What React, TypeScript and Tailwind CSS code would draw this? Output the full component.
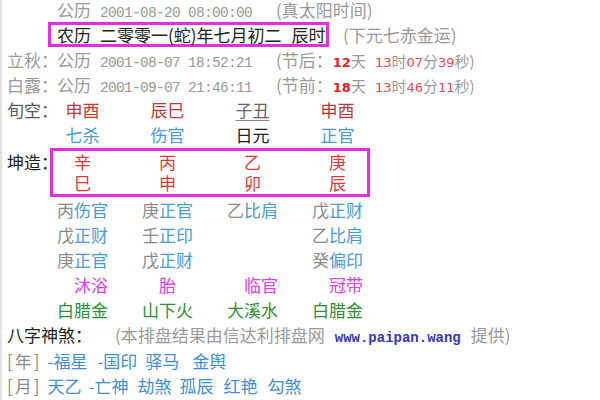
import React from "react";

const cjk = "font-['Noto_Sans_CJK_SC',sans-serif]";
const mono = "font-['Liberation_Mono',monospace] text-[14.5px] tracking-[-0.7px]";
const num = "font-['DejaVu_Sans',sans-serif] text-[13px]";

function Cells({ items, className = "" }: { items: React.ReactNode[]; className?: string }) {
  return (
    <div className={`grid grid-cols-[51px_51px_51px_51px] gap-x-[34px] text-center whitespace-nowrap ${className}`}>
      {items.map((x, i) => (
        <div key={i}>{x}</div>
      ))}
    </div>
  );
}

function HS({ s, g }: { s: string; g: string }) {
  return (
    <span>
      <span className="text-[#8a8a8a]">{s}</span>
      <span className="text-[#4a9ad8]">{g}</span>
    </span>
  );
}

function JieRow({ label, jie, date, d, h, m, s }: { label: string; jie: string; date: string; d: string; h: string; m: string; s: string }) {
  return (
    <div className="h-[25px] leading-[25px] whitespace-nowrap text-[#999]">
      <span className="inline-block w-[50px]">{label}</span>
      <span>公历</span>
      <span className={`${mono} ml-[9px]`}>{date}</span>
      <span className="ml-[24px]">({jie}：</span>
      <span className={`${num} font-bold text-[#e3202c]`}>{d}</span>
      <span className="text-[15px]">天</span>
      <span className={`${num} ml-[9px] text-[#e04a5a]`}>{h}</span>
      <span className="text-[15px]">时</span>
      <span className={`${num} text-[#e04a5a]`}>{m}</span>
      <span className="text-[15px]">分</span>
      <span className={`${num} text-[#e04a5a]`}>{s}</span>
      <span className="text-[15px]">秒)</span>
    </div>
  );
}

export default function App() {
  const row = "h-[25px] leading-[25px] flex items-center";
  return (
    <div className={`w-[600px] h-[400px] overflow-hidden bg-white border-l-2 border-[#e2e2e2] ${cjk} text-[17px]`}>
      <div className="pl-[5px]">
        <div className="h-[22px] leading-[20px] whitespace-nowrap text-[#999]">
          <span className="inline-block w-[50px]" />
          <span>公历</span>
          <span className={`${mono} ml-[9px]`}>2001-08-20 08:00:00</span>
          <span className="ml-[24px]">(真太阳时间)</span>
        </div>

        <div className="h-[25px] flex items-center whitespace-nowrap">
          <div className="ml-[41px] h-[25px] w-[281px] border-[3px] border-[#e030e0] pl-[6px] leading-[19px] text-[#222]">
            农历<span className="ml-[9px]">二零零一(蛇)年七月初二</span>
            <span className="ml-[10px]">辰时</span>
          </div>
          <span className="ml-[14px] leading-[25px] text-[#999]">(下元七赤金运)</span>
        </div>

        <JieRow label="立秋：" jie="节后" date="2001-08-07 18:52:21" d="12" h="13" m="07" s="39" />
        <JieRow label="白露：" jie="节前" date="2001-09-07 21:46:11" d="18" h="13" m="46" s="11" />

        <div className={row}>
          <span className="w-[50px] shrink-0 whitespace-nowrap text-[#5a5a5a]">旬空：</span>
          <Cells
            className="text-[#b83a3a]"
            items={[
              "申酉",
              "辰巳",
              <span className="text-[#666] underline underline-offset-[3px] decoration-[#888]">子丑</span>,
              "申酉",
            ]}
          />
        </div>

        <div className="h-[26px] leading-[26px] flex items-center">
          <span className="w-[50px] shrink-0" />
          <Cells
            className="text-[#4a9ad8]"
            items={["七杀", "伤官", <span className="text-[#222]">日元</span>, "正官"]}
          />
        </div>

        <div className="flex items-start h-[49px]">
          <div className="w-[43px] shrink-0 h-[21px] leading-[21px] mt-[3px] flex items-center whitespace-nowrap text-[#222]">坤造：</div>
          <div className="w-[320px] h-[49px] border-[3px] border-[#e030e0] pl-[4px] text-[#e03838]">
            <div className="h-[21px] leading-[21px] flex items-center">
              <Cells items={["辛", "丙", "乙", "庚"]} />
            </div>
            <div className="h-[22px] leading-[22px] flex items-center">
              <Cells items={["巳", "申", "卯", "辰"]} />
            </div>
          </div>
        </div>

        <div className={row}>
          <span className="w-[50px] shrink-0" />
          <Cells
            items={[
              <HS s="丙" g="伤官" />,
              <HS s="庚" g="正官" />,
              <HS s="乙" g="比肩" />,
              <HS s="戊" g="正财" />,
            ]}
          />
        </div>
        <div className={row}>
          <span className="w-[50px] shrink-0" />
          <Cells items={[<HS s="戊" g="正财" />, <HS s="壬" g="正印" />, "", <HS s="乙" g="比肩" />]} />
        </div>
        <div className={row}>
          <span className="w-[50px] shrink-0" />
          <Cells items={[<HS s="庚" g="正官" />, <HS s="戊" g="正财" />, "", <HS s="癸" g="偏印" />]} />
        </div>

        <div className={row}>
          <span className="w-[50px] shrink-0" />
          <Cells className="text-[#e040e0]" items={["\u3000沐浴", "胎", "\u3000临官", "\u3000冠带"]} />
        </div>
        <div className={row}>
          <span className="w-[50px] shrink-0" />
          <Cells className="text-[#2f8f36]" items={["白腊金", "山下火", "大溪水", "白腊金"]} />
        </div>

        <div className="h-[26px] leading-[26px] whitespace-nowrap">
          <span className="text-[#222]">八字神煞：</span>
          <span className="ml-[23px] text-[#999]">(本排盘结果由信达利排盘网</span>
          <span className="font-['Liberation_Mono',monospace] text-[14px] font-bold text-[#3535c0] ml-[10px]">www.paipan.wang</span>
          <span className="ml-[10px] text-[#999]">提供)</span>
        </div>

        <div className="h-[25px] leading-[25px] whitespace-nowrap text-[#3f8fd2]">
          <span className="text-[#8a8a8a] tracking-[2px]">[年]</span>
          <span className="ml-[6px]">-福星</span>
          <span className="ml-[10px]">-国印</span>
          <span className="ml-[8px]">驿马</span>
          <span className="ml-[13px]">金舆</span>
        </div>
        <div className="h-[25px] leading-[25px] whitespace-nowrap text-[#3f8fd2]">
          <span className="text-[#8a8a8a] tracking-[2px]">[月]</span>
          <span className="ml-[6px]">天乙</span>
          <span className="ml-[7px]">-亡神</span>
          <span className="ml-[9px]">劫煞</span>
          <span className="ml-[8px]">孤辰</span>
          <span className="ml-[10px]">红艳</span>
          <span className="ml-[10px]">勾煞</span>
        </div>
      </div>
    </div>
  );
}
